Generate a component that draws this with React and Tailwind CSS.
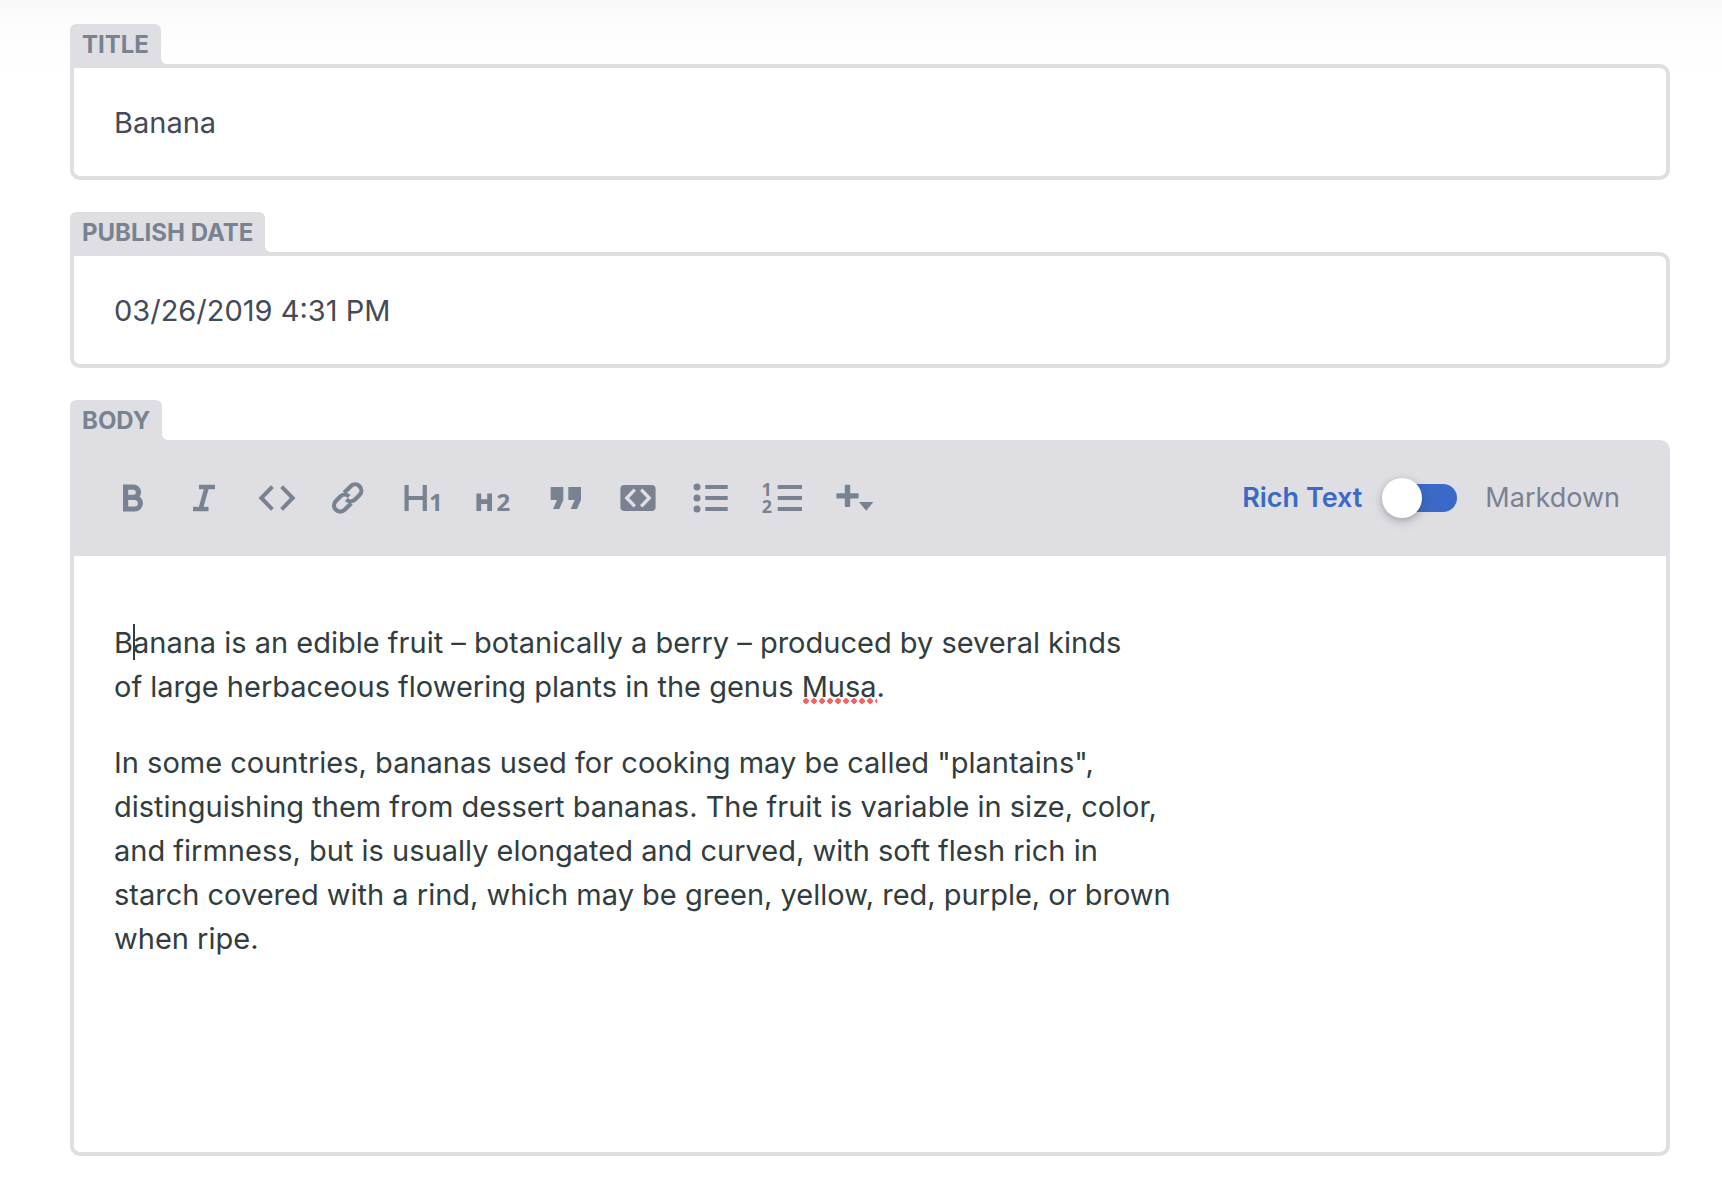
import { useState } from "react";

function Icon({ children }) {
  return (
    <svg
      viewBox="0 0 40 40"
      className="size-10 overflow-visible"
      fill="currentColor"
      stroke="none"
      aria-hidden="true"
    >
      {children}
    </svg>
  );
}

const glyph = { fontFamily: "Open Sans, sans-serif", fontWeight: 700 };

const tools = [
  {
    label: "Bold",
    icon: (
      <path
        d="M12.6 9.2H20.4a5 5 0 0 1 0 10.2H12.6zM12.6 19.4H21.6a5.7 5.7 0 0 1 0 11.6H12.6z"
        fill="none"
        stroke="currentColor"
        strokeWidth="5.2"
      />
    ),
  },
  {
    label: "Italic",
    icon: (
      <path
        d="M14 9H30M8 31H23.5M21.8 9L15.6 31"
        fill="none"
        stroke="currentColor"
        strokeWidth="4.6"
      />
    ),
  },
  {
    label: "Code",
    icon: (
      <path
        d="M15.4 8.6L4.3 20L15.4 31.4M24.6 8.6L35.7 20L24.6 31.4"
        fill="none"
        stroke="currentColor"
        strokeWidth="4"
      />
    ),
  },
  {
    label: "Link",
    icon: (
      <g
        fill="none"
        stroke="currentColor"
        strokeWidth="4.2"
        transform="rotate(-45 18.7 20)"
      >
        <path d="M17.5 26.2H8.2a6.2 6.2 0 0 1 0-12.4H14.5a6.2 6.2 0 0 1 6.2 6.2" />
        <path d="M19.9 13.8H29.2a6.2 6.2 0 0 1 0 12.4H22.9a6.2 6.2 0 0 1-6.2-6.2" />
      </g>
    ),
  },
  {
    label: "Heading 1",
    icon: (
      <>
        <path
          d="M5.6 7V33M23.8 7V33M5.6 20H23.8"
          fill="none"
          stroke="currentColor"
          strokeWidth="4.2"
        />
        <text x="28" y="33" fontSize="24" style={glyph}>
          1
        </text>
      </>
    ),
  },
  {
    label: "Heading 2",
    icon: (
      <>
        <path
          d="M5.8 15.4V33M16.6 15.4V33M5.8 23.6H16.6"
          fill="none"
          stroke="currentColor"
          strokeWidth="4.8"
        />
        <text x="23.6" y="33" fontSize="24" style={glyph}>
          2
        </text>
      </>
    ),
  },
  {
    label: "Quote",
    icon: (
      <path d="M5.7 9H18.3V22L14.3 31H8L12 22H5.7zM23.3 9H36V22L32 31H25.7L29.7 22H23.3z" />
    ),
  },
  {
    label: "Code Block",
    icon: (
      <>
        <rect x="3.4" y="7" width="35.2" height="26" rx="4" />
        <path
          d="M17.8 11.6L9.8 20L17.8 28.4M24.2 11.6L32.2 20L24.2 28.4"
          fill="none"
          stroke="#dfdfe3"
          strokeWidth="3.4"
        />
      </>
    ),
  },
  {
    label: "Bulleted List",
    icon: (
      <>
        <circle cx="8" cy="9" r="3.5" />
        <circle cx="8" cy="20" r="3.5" />
        <circle cx="8" cy="31" r="3.5" />
        <path d="M16.3 6.9h22.4v4.2H16.3zM16.3 17.9h22.4v4.2H16.3zM16.3 28.9h22.4v4.2H16.3z" />
      </>
    ),
  },
  {
    label: "Numbered List",
    icon: (
      <>
        <text x="0.6" y="18" fontSize="18" style={glyph}>
          1
        </text>
        <text x="0.8" y="35.2" fontSize="18" style={glyph}>
          2
        </text>
        <path d="M16.7 6.9H41v4.2H16.7zM16.7 17.9H41v4.2H16.7zM16.7 28.9H41v4.2H16.7z" />
      </>
    ),
  },
  {
    label: "Add Component",
    icon: (
      <>
        <rect x="11.8" y="6.8" width="5.4" height="22.2" rx="1" />
        <rect x="3.4" y="15.2" width="22.2" height="5.4" rx="1" />
        <path d="M26 24H40.4L33.2 32.8z" />
      </>
    ),
  },
];

function Tab({ children, ...rest }) {
  return (
    <label
      {...rest}
      className="relative flex h-10 w-fit items-center rounded-t-md bg-[#dfdfe3] px-3 pt-0.5 text-2xl font-bold uppercase text-[#798291] after:absolute after:bottom-0 after:left-full after:size-1.5 after:bg-[radial-gradient(circle_at_top_right,transparent_6px,#dfdfe3_6px)]"
    >
      {children}
    </label>
  );
}

function TextField({ id, label, value }) {
  return (
    <div>
      <Tab htmlFor={id}>{label}</Tab>
      <input
        id={id}
        type="text"
        defaultValue={value}
        className="block w-full rounded-[10px] rounded-tl-none border-4 border-[#dfdfe3] bg-white px-10 pt-[33px] pb-[31px] text-[29px] leading-11 text-[#444a57] outline-none"
      />
    </div>
  );
}

function ModeSwitch() {
  const [markdown, setMarkdown] = useState(false);
  return (
    <label className="flex cursor-pointer items-center text-[27px] text-[#798291]">
      <span className={markdown ? "" : "font-semibold text-[#3a69c7]"}>Rich Text</span>
      <span className="relative mr-7 ml-5 flex h-10 w-[75px] items-center">
        <input
          type="checkbox"
          role="switch"
          aria-label="Markdown mode"
          checked={markdown}
          onChange={(e) => setMarkdown(e.target.checked)}
          className="peer ml-1 h-7 w-[71px] cursor-pointer appearance-none rounded-full bg-[#3a69c7]"
        />
        <span className="pointer-events-none absolute left-0 size-10 rounded-full bg-white shadow-[0_4px_12px_rgba(68,74,87,0.15),0_2px_6px_rgba(68,74,87,0.3)] peer-checked:left-9" />
      </span>
      <span className={markdown ? "font-semibold text-[#3a69c7]" : ""}>Markdown</span>
    </label>
  );
}

function BodyEditor() {
  return (
    <div>
      <Tab id="body-label">Body</Tab>
      <div className="rounded-[10px] rounded-tl-none border-4 border-[#dfdfe3] bg-white">
        <div className="flex h-28 items-center justify-between bg-[#dfdfe3] pr-[46px] pb-1 pl-[23px]">
          <div className="flex text-[#798291]">
            {tools.map((t) => (
              <button
                key={t.label}
                type="button"
                aria-label={t.label}
                className="flex w-18 cursor-pointer justify-center"
              >
                <Icon>{t.icon}</Icon>
              </button>
            ))}
          </div>
          <ModeSwitch />
        </div>
        <div
          role="textbox"
          aria-multiline="true"
          aria-labelledby="body-label"
          tabIndex={0}
          className="flex min-h-[596px] flex-col gap-8 px-10 pt-[65px] pb-10 text-[29px] leading-11 text-[#313d3e] outline-none"
        >
          <p>
            B
            <span className="relative">
              <span className="absolute -top-px left-0 h-9 w-0.5 bg-[#313d3e]" />
            </span>
            anana is an edible fruit – botanically a berry – produced by several kinds
            <br />
            of large herbaceous flowering plants in the genus{" "}
            <span className="bg-[radial-gradient(circle_at_center,#f8615f_2.5px,transparent_3px)] bg-[length:8px_6px] bg-bottom-left bg-repeat-x">
              Musa
            </span>
            .
          </p>
          <p>
            In some countries, bananas used for cooking may be called "plantains",
            <br />
            distinguishing them from dessert bananas. The fruit is variable in size, color,
            <br />
            and firmness, but is usually elongated and curved, with soft flesh rich in
            <br />
            starch covered with a rind, which may be green, yellow, red, purple, or brown
            <br />
            when ripe.
          </p>
        </div>
      </div>
    </div>
  );
}

export default function App() {
  return (
    <main className="min-h-screen bg-white bg-[linear-gradient(to_bottom,#f9f9f9,#fdfdfd_30px,#ffffff_76px)] font-['Inter',sans-serif]">
      <form className="flex flex-col gap-8 pt-6 pr-[52px] pb-12 pl-[70px]">
        <TextField id="title" label="Title" value="Banana" />
        <TextField id="publish-date" label="Publish Date" value="03/26/2019 4:31 PM" />
        <BodyEditor />
      </form>
    </main>
  );
}
